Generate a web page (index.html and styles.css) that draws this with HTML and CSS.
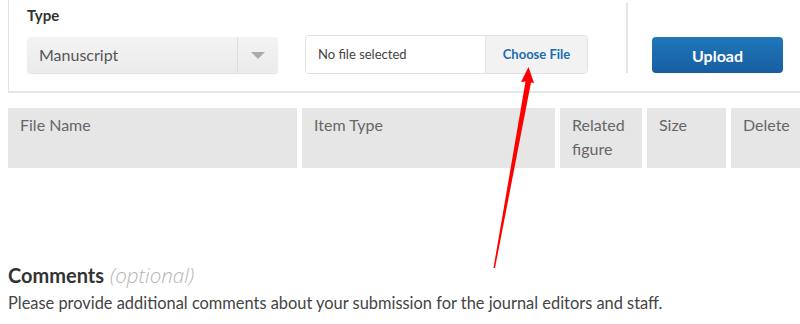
FILE: index.html
```html
<!DOCTYPE html>
<html>
<head>
<meta charset="utf-8">
<link rel="stylesheet" href="styles.css">
</head>
<body>
<div class="page">
  <div class="upload-box">
    <div class="field type-field">
      <div class="label">Type</div>
      <div class="select">
        <span class="select-text">Manuscript</span>
        <span class="select-arrow"><span class="tri"></span></span>
      </div>
    </div>
    <div class="field file-field">
      <div class="file-input">
        <span class="file-name">No file selected</span>
        <span class="file-btn">Choose File</span>
      </div>
    </div>
    <div class="field upload-field">
      <button class="upload-btn">Upload</button>
    </div>
  </div>

  <div class="table-head">
    <div class="th c1">File Name</div>
    <div class="th c2">Item Type</div>
    <div class="th c3">Related figure</div>
    <div class="th c4">Size</div>
    <div class="th c5">Delete</div>
  </div>

  <div class="comments">
    <h3 class="comments-title">Comments <span class="optional">(optional)</span></h3>
    <p class="comments-desc">Please provide additional comments about your submission for the journal editors and staff.</p>
  </div>

  <svg class="arrow" width="800" height="324" viewBox="0 0 800 324">
    <polygon points="528.5,67 534,83 531,82.5 495,268 493.5,268 525.5,81.5 521,82" fill="#f00"/>
  </svg>
</div>
</body>
</html>
```

FILE: styles.css
```css
* { box-sizing: border-box; }
html, body { margin: 0; padding: 0; background: #fff; }
body {
  font-family: "Lato", "Liberation Sans", sans-serif;
  color: #444;
  width: 800px;
  height: 324px;
  overflow: hidden;
}
.page { position: relative; width: 800px; height: 324px; overflow: hidden; }

.upload-box {
  margin-left: 8px;
  margin-top: -10px;
  height: 103px;
  border-left: 1px solid #e3e3e3;
  border-bottom: 2px solid #e6e6e6;
  display: flex;
  align-items: flex-start;
}
.type-field { padding-left: 18px; padding-top: 15px; width: 296px; flex: none; }
.label { font-weight: 700; font-size: 15px; color: #333; line-height: 20px; height: 22px; }
.select {
  margin-top: 10px;
  width: 251px;
  height: 36px;
  background: linear-gradient(#f3f3f3, #ebebeb);
  border-radius: 4px;
  box-shadow: 0 1px 1px rgba(0,0,0,0.12);
  display: flex;
  align-items: stretch;
}
.select-text { flex: 1; padding-left: 12px; line-height: 36px; font-size: 16px; color: #555; }
.select-arrow {
  width: 41px;
  border-left: 1px solid #ddd;
  display: flex;
  align-items: center;
  justify-content: center;
}
.tri {
  width: 0; height: 0;
  border-left: 7px solid transparent;
  border-right: 7px solid transparent;
  border-top: 7px solid #aaa;
}

.file-field { padding-top: 45px; width: 321px; flex: none; }
.file-input {
  width: 283px;
  height: 39px;
  border: 1px solid #e0e0e0;
  border-radius: 4px;
  display: flex;
  overflow: hidden;
}
.file-name {
  width: 180px;
  background: #fff;
  font-size: 13px;
  color: #444;
  line-height: 37px;
  padding-left: 12px;
  border-right: 1px solid #e6e6e6;
}
.file-btn {
  flex: 1;
  background: #f2f2f2;
  color: #1b6db0;
  font-weight: 700;
  font-size: 13px;
  text-align: center;
  line-height: 37px;
}

.upload-field {
  margin-top: 13px;
  height: 70px;
  border-left: 2px solid #e6e6e6;
  padding-left: 24px;
  padding-top: 34px;
  flex: none;
}
.upload-btn {
  display: block;
  width: 131px;
  height: 36px;
  border: none;
  border-radius: 4px;
  background: linear-gradient(#1f77ba, #175ea1);
  color: #fff;
  font-family: inherit;
  font-weight: 700;
  font-size: 16px;
  padding: 0;
}

.table-head {
  margin-top: 15px;
  margin-left: 8px;
  display: flex;
  gap: 5px;
  height: 60px;
}
.th {
  flex: none;
  background: #e6e6e6;
  color: #666;
  font-size: 16px;
  line-height: 24px;
  padding: 5px 12px;
}
.c1 { width: 289px; }
.c2 { width: 253px; }
.c3 { width: 82px; }
.c4 { width: 79px; }
.c5 { width: 80px; }

.comments { padding: 0 8px; margin-top: 95px; }
.comments-title {
  margin: 0;
  font-size: 20px;
  line-height: 24px;
  font-weight: 700;
  color: #333;
}
.optional {
  margin-left: 1px;
  font-family: "Open Sans", "Lato", sans-serif;
  font-weight: 300;
  font-style: italic;
  font-size: 20.5px;
  color: #b5b5b5;
}
.comments-desc { margin: 6px 0 0; font-size: 16.4px; line-height: 20px; color: #444; }

.arrow { position: absolute; left: 0; top: 0; pointer-events: none; }
```
